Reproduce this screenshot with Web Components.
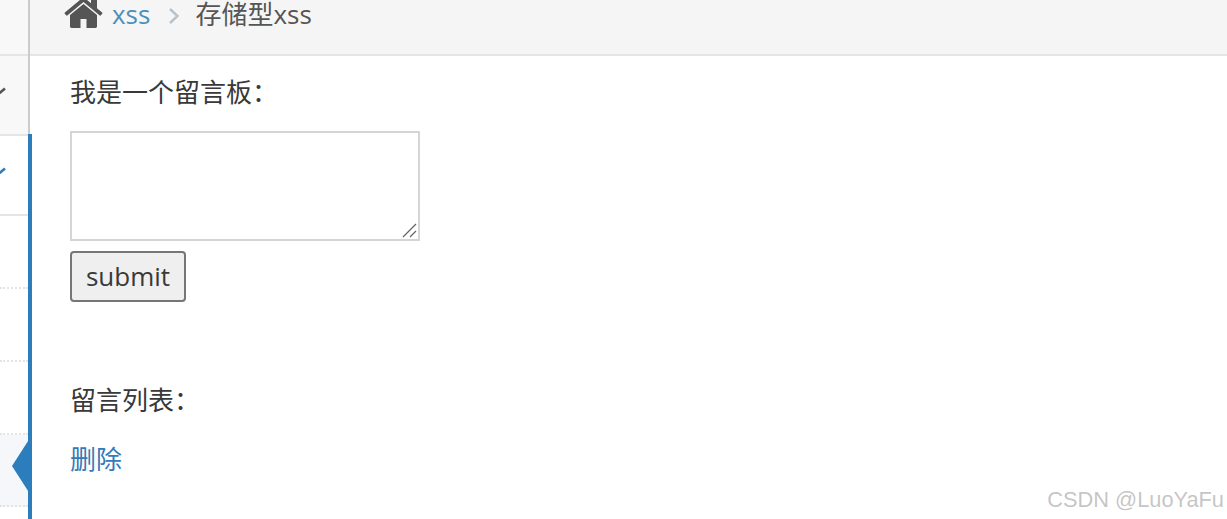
<!DOCTYPE html>
<html>
<head>
<meta charset="utf-8">
<title>存储型xss</title>
<style>
html,body{margin:0;padding:0;height:519px;overflow:hidden;background:#fff}
body{font-family:"Open Sans","Noto Sans CJK SC",sans-serif;font-size:26px;color:#393939}
</style>
</head>
<body>
<app-shell>
  <side-bar slot="side"></side-bar>
  <bread-crumb slot="top"><a-link>xss</a-link></bread-crumb>
  <message-board></message-board>
</app-shell>
<water-mark>CSDN @LuoYaFu</water-mark>
<script>
class AppShell extends HTMLElement{
    constructor(){
        super();
        this.shadowDOM = this.attachShadow({mode:"open"});
        this.shadowDOM.innerHTML=`
        <style>
        :host{display:flex;height:519px}
        .main{flex:1;min-width:0;display:flex;flex-direction:column}
        </style>
        <slot name="side"></slot>
        <div class="main">
            <slot name="top"></slot>
            <slot></slot>
        </div>`;
    }
}
customElements.define("app-shell",AppShell);

class SideBar extends HTMLElement{
    constructor(){
        super();
        this.shadowDOM = this.attachShadow({mode:"open"});
        this.shadowDOM.innerHTML=`
        <style>
        :host{display:flex;flex-direction:column;width:28px;flex:none;height:519px;position:relative}
        .row{box-sizing:border-box;position:relative;overflow:hidden;flex:none}
        .a{height:54px;background:#f8f8f8}
        .b{height:80px;background:#f8f8f8;border-top:2px solid #e5e5e5}
        .c{height:82px;background:#fff;border-top:2px solid #e5e5e5;border-bottom:2px solid #e5e5e5}
        .d{height:73px;background:#fff;border-bottom:2px dotted #e4e4e4}
        .e{height:72px;background:#f5f7fb;border-bottom:2px dotted #e4e4e4}
        .f{flex:1;background:#fff}
        svg{position:absolute;left:0;width:7px;height:7px;fill:none;stroke-width:2.6}
        .rail{position:absolute;left:28px;width:2px;top:0;height:134px;background:#ccc}
        .blue{position:absolute;left:28px;width:4px;top:134px;bottom:0;background:#2b7dbc}
        .tip{position:absolute;left:12px;top:438px;width:18px;height:56px;background:#2b7dbc;clip-path:polygon(100% 0,0 50%,100% 100%)}
        </style>
        <div class="row a"></div>
        <div class="row b"><svg style="top:31px;stroke:#555" viewBox="0 0 7 7"><path d="M-1 6.5 L5 1.5"/></svg></div>
        <div class="row c"><svg style="top:31px;stroke:#2b7dbc" viewBox="0 0 7 7"><path d="M-1 6.5 L5 1.5"/></svg></div>
        <div class="row d"></div>
        <div class="row d"></div>
        <div class="row d"></div>
        <div class="row e"></div>
        <div class="row f"></div>
        <div class="rail"></div>
        <div class="blue"></div>
        <div class="tip"></div>`;
    }
}
customElements.define("side-bar",SideBar);

class ALink extends HTMLElement{
    constructor(){
        super();
        this.shadowDOM = this.attachShadow({mode:"open"});
        this.shadowDOM.innerHTML=`
        <style>
        :host{display:inline;color:#4c8fbd}
        </style>
        <slot></slot>`;
    }
}
customElements.define("a-link",ALink);

class BreadCrumb extends HTMLElement{
    constructor(){
        super();
        this.shadowDOM = this.attachShadow({mode:"open"});
        this.shadowDOM.innerHTML=`
        <style>
        :host{display:flex;box-sizing:border-box;height:56px;align-items:flex-start;background:#f5f5f5;border-bottom:2px solid #e5e5e5;border-left:2px solid transparent;padding-left:35px;color:#555;line-height:30px}
        .home{width:42px;height:42px;flex:none;margin:-8px 0 0 -1px}
        .link{margin:-1px 0 0 6px}
        .sep{width:12px;height:18px;flex:none;margin:7px 15px 0 18px}
        .cur{margin-top:-1px}
        </style>
        <svg class="home" viewBox="0 0 1792 1792"><path fill="#555" d="M1408 992v480q0 26-19 45t-45 19h-384v-384h-256v384h-384q-26 0-45-19t-19-45v-480q0-1 .5-3t.5-3l575-474 575 474q1 2 1 6zm223-69l-62 74q-8 9-21 11h-3q-13 0-21-7l-692-577-692 577q-12 8-24 7-13-2-21-11l-62-74q-8-10-7-23.5t11-22.5l719-599q32-26 76-26t76 26l244 204v-195q0-14 9-23t23-9h192q14 0 23 9t9 23v408l219 182q10 8 11 21.5t-7 23.5z"/></svg>
        <span class="link"><slot></slot></span>
        <svg class="sep" viewBox="0 0 12 18"><path d="M2 2 L9.5 9 L2 16" fill="none" stroke="#b8c2cc" stroke-width="2.4"/></svg>
        <span class="cur">存储型xss</span>`;
    }
}
customElements.define("bread-crumb",BreadCrumb);

class MessageBoard extends HTMLElement{
    constructor(){
        super();
        this.shadowDOM = this.attachShadow({mode:"open"});
        this.shadowDOM.innerHTML=`
        <style>
        :host{display:block;padding:19px 0 0 42px;line-height:34px;color:#393939}
        p{margin:0}
        .box{position:relative;width:350px;height:110px;margin:22px 0 10px}
        textarea{display:block;box-sizing:border-box;width:100%;height:100%;border:2px solid #d5d5d5;background:#fff;padding:0;border-radius:0;outline:0;resize:none}
        .grip{position:absolute;right:3px;bottom:3px;width:15px;height:15px}
        button{display:block;box-sizing:border-box;width:116px;height:51px;padding:0 0 2px;background:#efefef;border:2px solid #767676;border-radius:4px;font:inherit;color:#393939}
        .list{margin-top:81px}
        .del{margin-top:25px;color:#337ab7}
        </style>
        <p>我是一个留言板：</p>
        <div class="box">
            <textarea></textarea>
            <svg class="grip" viewBox="0 0 15 15"><path d="M1 14 L14 1 M8 14 L14 8" stroke="#666" stroke-width="1.3" fill="none"/></svg>
        </div>
        <button>submit</button>
        <p class="list">留言列表：</p>
        <p class="del">删除</p>`;
    }
}
customElements.define("message-board",MessageBoard);

class WaterMark extends HTMLElement{
    constructor(){
        super();
        this.shadowDOM = this.attachShadow({mode:"open"});
        this.shadowDOM.innerHTML=`
        <style>
        :host{position:absolute;right:3px;bottom:6px;font:21.8px/26px "Liberation Sans",sans-serif;color:rgba(175,175,175,.72)}
        </style>
        <slot></slot>`;
    }
}
customElements.define("water-mark",WaterMark);
</script>
</body>
</html>
